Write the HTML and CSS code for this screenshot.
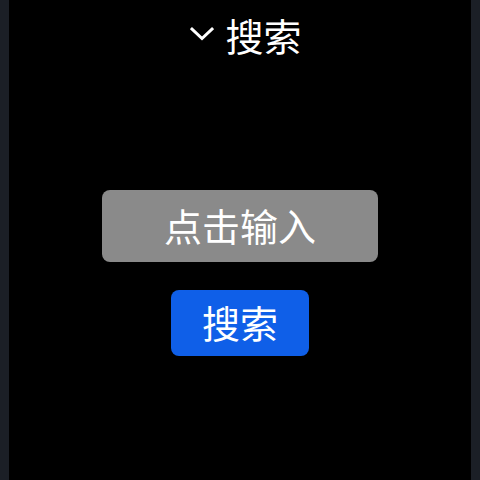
FILE: index.html
```html
<!DOCTYPE html>
<html lang="zh">
<head>
<meta charset="utf-8">
<link rel="stylesheet" href="styles.css">
</head>
<body>
<div class="panel">
  <div class="header">
    <svg class="chev" width="24" height="16" viewBox="0 0 24 16"><polyline points="2,3 12,12.5 22,3" fill="none" stroke="#fff" stroke-width="3" stroke-linecap="square"/></svg>
    <span class="title">搜索</span>
  </div>
  <div class="body">
    <div class="input">点击输入</div>
    <div class="btn">搜索</div>
  </div>
</div>
</body>
</html>
```
FILE: styles.css
```css
html, body {
  margin: 0;
  padding: 0;
  height: 100%;
  background: #1b1f26;
  overflow: hidden;
}
body {
  font-family: "Noto Sans CJK SC", "Noto Sans", sans-serif;
  color: #fff;
}
.panel {
  margin: 0 9px;
  height: 100%;
  background: #000;
  display: flex;
  flex-direction: column;
  align-items: center;
}
.header {
  display: flex;
  align-items: center;
  gap: 11px;
  height: 69px;
  margin-left: 12px;
}
.chev {
  display: block;
  margin-top: -1px;
}
.title {
  font-size: 38px;
  line-height: 1;
}
.body {
  margin-top: 121px;
  display: flex;
  flex-direction: column;
  align-items: center;
  gap: 28px;
}
.input {
  width: 276px;
  height: 72px;
  box-sizing: border-box;
  padding-bottom: 3px;
  border-radius: 8px;
  background: #8a8a8a;
  font-size: 38px;
  display: flex;
  align-items: center;
  justify-content: center;
}
.btn {
  width: 138px;
  height: 66px;
  box-sizing: border-box;
  padding-bottom: 3px;
  border-radius: 8px;
  background: #0f5fe8;
  font-size: 38px;
  display: flex;
  align-items: center;
  justify-content: center;
}
```
